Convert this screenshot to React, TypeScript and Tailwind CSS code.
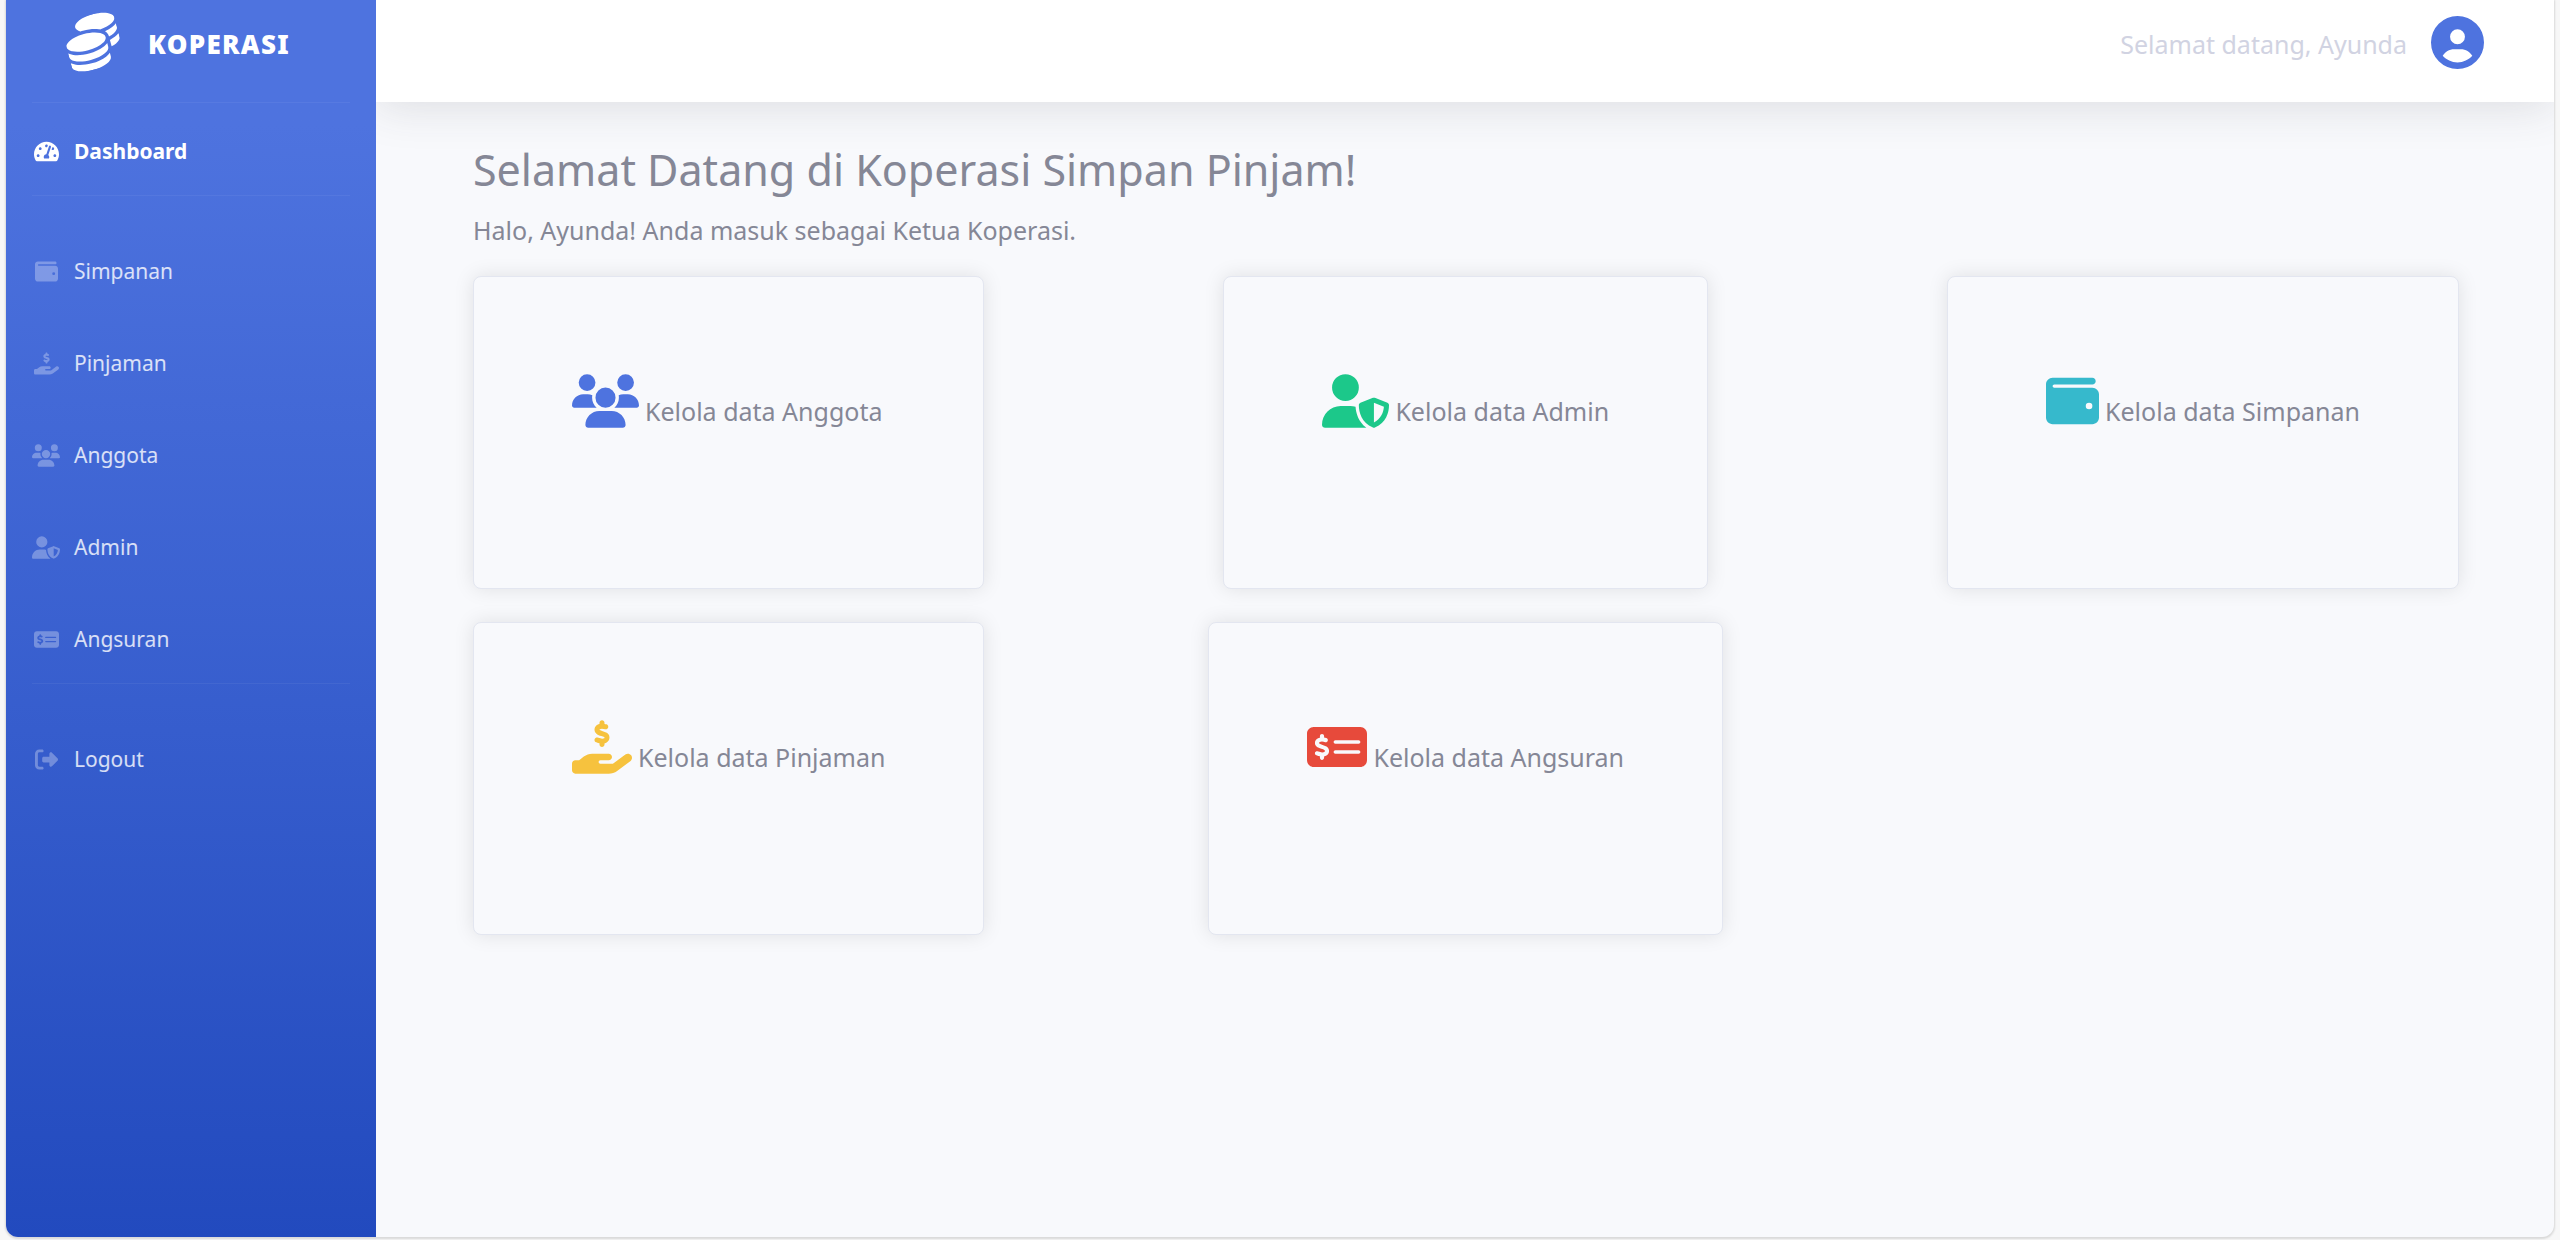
import type { IconType } from "react-icons";
import { FaTachometerAlt } from "react-icons/fa";
import {
  FaCircleUser,
  FaCoins,
  FaHandHoldingDollar,
  FaMoneyCheckDollar,
  FaRightFromBracket,
  FaUserShield,
  FaUsers,
  FaWallet,
} from "react-icons/fa6";

type NavEntry = { label: string; icon: IconType; iconClass: string };

const navEntries: NavEntry[] = [
  { label: "Simpanan", icon: FaWallet, iconClass: "w-[23px]" },
  { label: "Pinjaman", icon: FaHandHoldingDollar, iconClass: "w-[25px]" },
  { label: "Anggota", icon: FaUsers, iconClass: "w-[28px]" },
  { label: "Admin", icon: FaUserShield, iconClass: "w-[28px]" },
  { label: "Angsuran", icon: FaMoneyCheckDollar, iconClass: "w-[25px]" },
];

const cards: NavEntry[] = [
  { label: "Kelola data Anggota", icon: FaUsers, iconClass: "w-[67px] text-[#4e73df]" },
  { label: "Kelola data Admin", icon: FaUserShield, iconClass: "w-[67px] text-[#1cc88a]" },
  { label: "Kelola data Simpanan", icon: FaWallet, iconClass: "w-[53px] text-[#36b9cc]" },
  { label: "Kelola data Pinjaman", icon: FaHandHoldingDollar, iconClass: "w-[60px] text-[#f6c23e]" },
  { label: "Kelola data Angsuran", icon: FaMoneyCheckDollar, iconClass: "w-[60px] text-[#e74a3b]" },
];

function NavLink({ label, icon: Icon, iconClass, active = false }: NavEntry & { active?: boolean }) {
  return (
    <a
      href="#"
      className={
        active
          ? "flex h-[92px] items-center gap-3.5 px-[26px] pt-1 font-bold text-white"
          : "flex h-[92px] items-center gap-3.5 px-[26px] pt-1 text-white/80"
      }
    >
      <span className={active ? "flex w-7 justify-center" : "flex w-7 justify-center text-white/30"}>
        <Icon className={`h-[23px] shrink-0 ${iconClass}`} />
      </span>
      <span className="text-[21px] leading-8">{label}</span>
    </a>
  );
}

function Divider({ spaced = false }: { spaced?: boolean }) {
  return <hr className={spaced ? "mx-[26px] mb-[27px] border-white/5" : "mx-[26px] border-white/5"} />;
}

function Sidebar() {
  return (
    <nav className="relative z-10 flex w-[370px] shrink-0 flex-col bg-gradient-to-b from-[#4e73df] from-10% to-[#224abe]">
      <a href="#" className="flex h-[102px] gap-7 pl-[60px] text-white">
        <FaCoins className="mt-[15px] size-[54px] -rotate-15" />
        <span className="mt-[26px] text-[26px] leading-9 font-black tracking-wider uppercase">Koperasi</span>
      </a>
      <Divider />
      <NavLink label="Dashboard" icon={FaTachometerAlt} iconClass="w-[25px]" active />
      <Divider spaced />
      {navEntries.map((entry) => (
        <NavLink key={entry.label} {...entry} />
      ))}
      <Divider spaced />
      <NavLink label="Logout" icon={FaRightFromBracket} iconClass="w-[23px]" />
    </nav>
  );
}

function Card({ label, icon: Icon, iconClass }: NavEntry) {
  return (
    <a
      href="#"
      className="flex min-h-[313px] items-start rounded-lg border border-[#e3e6f0] bg-[#f8f9fc] px-[98px] pt-[97px] shadow-[0_0_20px_rgba(0,0,0,0.1)] nth-[3n+2]:justify-self-center"
    >
      <span className="flex items-end gap-1.5">
        <Icon className={`h-[54px] shrink-0 ${iconClass}`} />
        <span className="text-[25px] leading-[34px] whitespace-nowrap">{label}</span>
      </span>
    </a>
  );
}

export default function App() {
  return (
    <div className="flex min-h-screen bg-[#f7f7f7] px-1.5 pb-[3px] font-['Noto_Sans',sans-serif] text-[#858796]">
      <div className="flex flex-1 overflow-hidden rounded-b-xl bg-[#f8f9fc] shadow-[0_1px_2px_1px_rgba(0,0,0,0.12)]">
        <Sidebar />
        <div className="flex flex-1 flex-col">
          <header className="flex h-[102px] items-start justify-end gap-6 bg-white pr-[70px] shadow-[0_4px_46px_rgba(58,59,69,0.15)]">
            <span className="mt-[26px] text-[25px] leading-9 text-[#d1d3e2]">Selamat datang, Ayunda</span>
            <button type="button" aria-label="Profil" className="mt-4 text-[#4e73df]">
              <FaCircleUser className="size-[53px]" />
            </button>
          </header>
          <main className="pt-10 pr-[95px] pl-[97px]">
            <h1 className="text-[43px] leading-14 font-normal">Selamat Datang di Koperasi Simpan Pinjam!</h1>
            <p className="mt-3 text-[25px] leading-10">Halo, Ayunda! Anda masuk sebagai Ketua Koperasi.</p>
            <div className="mt-[26px] grid grid-cols-[auto_auto_auto] justify-between gap-y-[33px]">
              {cards.map((card) => (
                <Card key={card.label} {...card} />
              ))}
            </div>
          </main>
        </div>
      </div>
    </div>
  );
}
